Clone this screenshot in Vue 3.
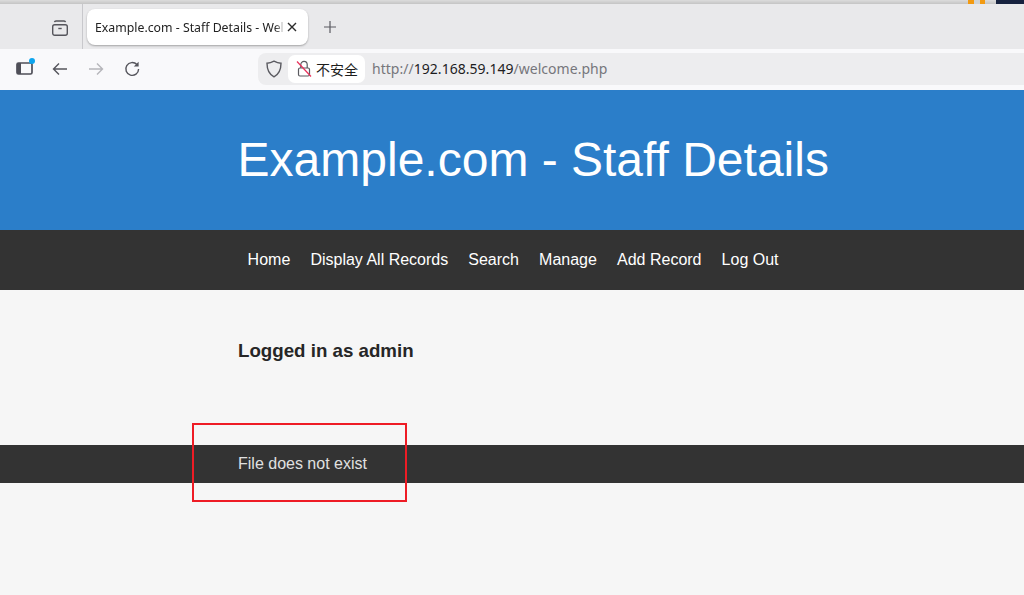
<template>
  <div class="page">
    <div class="topstrip">
      <span class="strip-orange"><i class="strip-center"></i></span>
      <span class="strip-dark"></span>
    </div>
    <div class="tabbar">
      <div class="tabside">
        <svg class="ic-tabs" width="18" height="18" viewBox="0 0 18 18" fill="none" stroke="#55555c" stroke-width="1.4">
          <rect x="1.7" y="5.7" width="14.6" height="10.6" rx="2" />
          <path d="M3.5 3.2 Q3.7 2 5 2 H13 Q14.3 2 14.5 3.2" />
          <path d="M7.3 9.5 H10.7" />
        </svg>
      </div>
      <div class="tab">
        <span class="tab-title">Example.com - Staff Details - Wel</span>
        <svg class="tab-close" width="10" height="10" viewBox="0 0 10 10" stroke="#2b2b2b" stroke-width="1.4"><path d="M1 1 L9 9 M9 1 L1 9" /></svg>
      </div>
      <svg class="newtab" width="14" height="14" viewBox="0 0 14 14" stroke="#5b5b62" stroke-width="1.2"><path d="M7 1 V13 M1 7 H13" /></svg>
    </div>
    <div class="toolbar">
      <div class="navbtns">
        <span class="sidebar-ic">
          <svg width="17" height="13" viewBox="0 0 17 13" fill="none">
            <rect x="1" y="1" width="15" height="11" rx="1.5" stroke="#4f4f58" stroke-width="1.7" />
            <rect x="1" y="1" width="4" height="11" fill="#4f4f58" />
          </svg>
          <i class="dot"></i>
        </span>
        <svg class="b-back" width="16" height="14" viewBox="0 0 16 14" fill="none" stroke="#55555c" stroke-width="1.4"><path d="M15 7 H1.5 M7 1.5 L1.5 7 L7 12.5" /></svg>
        <svg class="b-fwd" width="16" height="14" viewBox="0 0 16 14" fill="none" stroke="#b5b5ba" stroke-width="1.4"><path d="M1 7 H14.5 M9 1.5 L14.5 7 L9 12.5" /></svg>
        <svg class="b-reload" width="16" height="16" viewBox="0 0 16 16" fill="none" stroke="#55555c" stroke-width="1.4"><path d="M12.9 3.6 A6.4 6.4 0 1 0 14.6 8" /><path d="M14.6 0.8 V5.6 H9.8 Z" fill="#55555c" stroke="none" /></svg>
      </div>
      <div class="urlbar">
        <svg class="shield" width="16" height="18" viewBox="0 0 16 18" fill="none" stroke="#5a5a60" stroke-width="1.4"><path d="M8 1.2 C10.5 2.6 12.5 3.2 15 3.2 C15 9 14 13.6 8 16.8 C2 13.6 1 9 1 3.2 C3.5 3.2 5.5 2.6 8 1.2 Z" /></svg>
        <div class="insecure">
          <svg width="16" height="17" viewBox="0 0 16 17" fill="none">
            <rect x="2.5" y="8" width="11" height="8" rx="1.5" stroke="#5a5a60" stroke-width="1.2" />
            <path d="M4.8 8 V4.6 A3.2 3.2 0 0 1 11.2 4.6 V8" stroke="#5a5a60" stroke-width="1.2" />
            <path d="M1 1.5 L15 16.5" stroke="#e8305a" stroke-width="1.2" />
          </svg>
          <span class="insecure-text">不安全</span>
        </div>
        <span class="url"><span class="dim">http://</span>192.168.59.149<span class="dim">/welcome.php</span></span>
      </div>
    </div>
    <div class="gap"></div>
    <header class="hero"><h1>Example.com - Staff Details</h1></header>
    <nav class="menu">
      <a v-for="item in items" :key="item">{{ item }}</a>
    </nav>
    <main class="content"><h3>Logged in as admin</h3></main>
    <footer class="foot"><p>File does not exist</p></footer>
    <div class="redbox"></div>
  </div>
</template>

<script setup>
const items = ['Home', 'Display All Records', 'Search', 'Manage', 'Add Record', 'Log Out']
</script>

<style>
html, body { margin: 0; padding: 0; overflow: hidden; }
</style>

<style scoped>
.page {
  position: relative;
  width: 1024px;
  height: 595px;
  overflow: hidden;
  background: #f6f6f6;
  font-family: "Liberation Sans", Arial, sans-serif;
}
.topstrip {
  height: 4px;
  background: linear-gradient(#dcdcdc, #c4c4c4);
  display: flex;
  justify-content: flex-end;
}
.strip-orange {
  width: 17px;
  background: #f29a12;
  margin-right: 11px;
  display: flex;
  justify-content: center;
}
.strip-center {
  width: 6px;
  background: #cfd4d8;
}
.strip-dark {
  width: 28px;
  background: #16223f;
}
.tabbar {
  height: 45px;
  background: #e9e9eb;
  display: flex;
  align-items: flex-start;
}
.tabside {
  width: 82px;
  height: 45px;
  border-right: 1px solid #c8c8cc;
  display: flex;
  justify-content: flex-end;
  align-items: center;
}
.ic-tabs { margin-right: 13px; margin-top: 3px; }
.tab {
  margin-left: 4px;
  margin-top: 5px;
  width: 221px;
  height: 36px;
  background: #fff;
  border-radius: 8px;
  box-shadow: 0 1px 2px rgba(0, 0, 0, 0.3);
  display: flex;
  align-items: center;
  padding-left: 8px;
  box-sizing: border-box;
}
.tab-title {
  font-family: "Noto Sans", "Open Sans", sans-serif;
  font-size: 12.3px;
  color: #222;
  white-space: nowrap;
  width: 190px;
  -webkit-mask-image: linear-gradient(to right, #000 180px, transparent 190px);
  mask-image: linear-gradient(to right, #000 180px, transparent 190px);
}
.tab-close { margin-left: 2px; }
.newtab { margin-left: 15px; margin-top: 16px; }
.toolbar {
  height: 39px;
  background: #f9f9fb;
  display: flex;
  align-items: center;
}
.navbtns {
  width: 258px;
  height: 39px;
  display: flex;
  align-items: center;
  flex: none;
}
.sidebar-ic { position: relative; margin-left: 16px; width: 17px; height: 13px; display: block; }
.sidebar-ic svg { display: block; }
.dot {
  position: absolute;
  right: -2px;
  top: -4px;
  width: 6px;
  height: 6px;
  border-radius: 50%;
  background: #0ea5ee;
}
.b-back { margin-left: 19px; }
.b-fwd { margin-left: 20px; }
.b-reload { margin-left: 20px; }
.urlbar {
  flex: 1;
  height: 32px;
  background: #ededef;
  border-radius: 8px 0 0 8px;
  display: flex;
  align-items: center;
}
.shield { margin-left: 8px; }
.insecure {
  margin-left: 6px;
  width: 77px;
  height: 28px;
  background: #fff;
  border-radius: 7px;
  display: flex;
  align-items: center;
  padding-left: 8px;
  box-sizing: border-box;
}
.insecure-text {
  margin-left: 4px;
  font-family: "Noto Sans CJK SC", sans-serif;
  font-size: 14px;
  line-height: 20px;
  color: #1c1c1c;
  white-space: nowrap;
}
.url {
  margin-left: 7px;
  font-family: "Noto Sans", "Open Sans", sans-serif;
  font-size: 14px;
  letter-spacing: 0.03px;
  color: #1d1d1f;
  white-space: nowrap;
}
.dim { color: #76767c; }
.gap { height: 2px; background: #f9f9fb; }
.hero {
  height: 140px;
  background: #2b7ec9;
  padding: 0 0 2px 237.6px;
  box-sizing: border-box;
  display: flex;
  align-items: center;
}
.hero h1 {
  margin: 0;
  font-size: 48px;
  font-weight: 400;
  color: #fff;
  white-space: nowrap;
}
.menu {
  height: 60px;
  background: #333;
  display: flex;
  align-items: center;
  padding-left: 247.6px;
  gap: 20.1px;
  font-size: 16px;
  color: #fff;
}
.menu a { white-space: nowrap; }
.content {
  height: 155px;
  padding-left: 238px;
  padding-top: 50px;
  box-sizing: border-box;
}
.content h3 {
  margin: 0;
  font-size: 18.72px;
  font-weight: 700;
  color: #262626;
  line-height: 21px;
}
.foot {
  height: 38px;
  background: #333;
  padding-left: 238px;
  display: flex;
  align-items: center;
  font-size: 16px;
  color: #e0e0e0;
}
.foot p { margin: 0; }
.redbox {
  position: absolute;
  left: 192px;
  top: 423px;
  width: 211px;
  height: 75px;
  border: 2px solid #ee1c25;
}
</style>
